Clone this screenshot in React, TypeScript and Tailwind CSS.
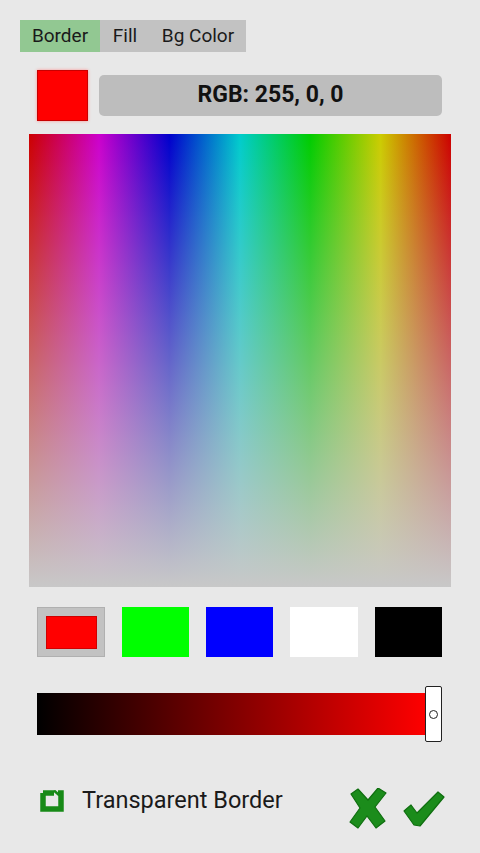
import React from "react";

const font = { fontFamily: "Roboto, 'Liberation Sans', sans-serif" };

function CheckBoxIcon() {
  return (
    <svg width="24" height="22" viewBox="0 0 24 22">
      <path d="M3 3 H14 M18 3 H21 V19 H3 V3" fill="none" stroke="#178a17" strokeWidth="5.5" strokeLinejoin="miter" />
      <path d="M14 0.5 L19 5" stroke="#178a17" strokeWidth="2.5" />
    </svg>
  );
}

function XIcon() {
  return (
    <svg width="38" height="41" viewBox="0 0 38 41">
      <path d="M2 6 L9 1 L19 12 L29 0 L37 5 L26 19 L36 33 L27 40 L18 28 L9 40 L1 34 L11 20 Z" fill="#1b8c1b" stroke="#0f6e0f" strokeWidth="1.2" strokeLinejoin="round" />
    </svg>
  );
}

function CheckIcon() {
  return (
    <svg width="42" height="38" viewBox="0 0 42 38">
      <path d="M1 21 L8 15 L14 23 L35 2 L41 7 L17 36 L11 35 Z" fill="#1b8c1b" stroke="#0f6e0f" strokeWidth="1.2" strokeLinejoin="round" />
    </svg>
  );
}

export default function App() {
  return (
    <div className="w-[480px] h-[853px] bg-[#e8e8e8] flex flex-col overflow-hidden" style={font}>
      {/* Tabs */}
      <div className="mt-[20px] ml-[20px] flex h-[32px] w-[226px] bg-[#c2c2c2] text-[19px] text-[#1a1a1a]">
        <div className="w-[80px] bg-[#92c892] flex items-center justify-center">Border</div>
        <div className="w-[50px] flex items-center justify-center">Fill</div>
        <div className="w-[96px] flex items-center justify-center">Bg Color</div>
      </div>

      {/* Current color + RGB */}
      <div className="mt-[18px] ml-[37px] flex items-center gap-[11px]">
        <div className="w-[51px] h-[51px] bg-[#ff0000] border border-[#c80000] shadow-[0_0_3px_#ff9090]" />
        <div className="w-[343px] h-[41px] rounded-[5px] bg-[#bdbdbd] flex items-center justify-center text-[23px] font-bold text-[#111]">
          RGB: 255, 0, 0
        </div>
      </div>

      {/* Spectrum */}
      <div className="mt-[13px] ml-[29px] w-[422px] h-[453px] bg-[linear-gradient(to_bottom,rgba(200,200,200,0)_0%,rgba(200,200,200,0.55)_55%,#c8c8c8_100%),linear-gradient(to_right,#cc0000_0%,#cc00cc_16.6%,#0000cc_33.3%,#00cccc_50%,#00cc00_66.6%,#cccc00_83.3%,#cc0000_100%)]" />

      {/* Preset swatches */}
      <div className="mt-[20px] ml-[37px] flex gap-[17px]">
        <div className="w-[68px] h-[50px] bg-[#c2c2c2] border border-[#b0b0b0] flex items-center justify-center">
          <div className="w-[51px] h-[33px] bg-[#ff0000] border border-[#d00000]" />
        </div>
        <div className="w-[67px] h-[50px] bg-[#00ff00]" />
        <div className="w-[67px] h-[50px] bg-[#0000ff]" />
        <div className="w-[68px] h-[50px] bg-[#ffffff]" />
        <div className="w-[67px] h-[50px] bg-[#000000]" />
      </div>

      {/* Brightness slider */}
      <div className="mt-[29px] ml-[37px] flex items-center relative w-[405px] h-[56px]">
        <div className="w-[390px] h-[42px] bg-[linear-gradient(to_right,#000000,#ff0000)]" />
        <div className="absolute left-[388px] top-0 w-[17px] h-[56px] bg-white border-[1.5px] border-[#222] rounded-[2px] flex items-center justify-center">
          <div className="w-[9px] h-[9px] rounded-full border-[1.5px] border-[#222]" />
        </div>
      </div>

      {/* Bottom row */}
      <div className="mt-[46px] ml-[40px] mr-[35px] flex items-center">
        <div className="flex items-center gap-[18px] mt-[-16px]">
          <CheckBoxIcon />
          <span className="text-[23.5px] text-[#1a1a1a]">Transparent Border</span>
        </div>
        <div className="ml-auto flex items-center gap-[16px]">
          <XIcon />
          <CheckIcon />
        </div>
      </div>
    </div>
  );
}
